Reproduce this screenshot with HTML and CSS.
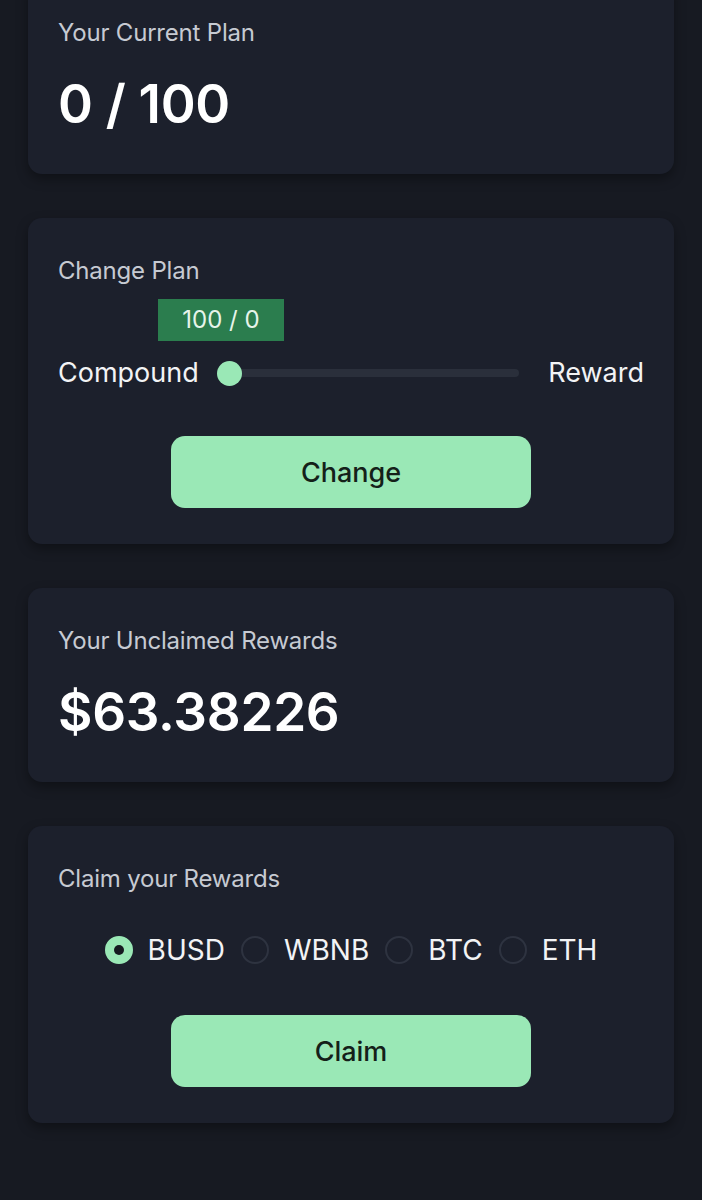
FILE: index.html
```html
<!DOCTYPE html>
<html lang="en">
<head>
<meta charset="utf-8">
<title>Plan</title>
<link rel="stylesheet" href="styles.css">
</head>
<body>
<main class="stack">
  <section class="card card-first">
    <div class="label">Your Current Plan</div>
    <div class="value">0 / 100</div>
  </section>

  <section class="card">
    <div class="label">Change Plan</div>
    <div class="badge">100 / 0</div>
    <div class="slider-row">
      <span class="side">Compound</span>
      <div class="track"><span class="thumb"></span></div>
      <span class="side">Reward</span>
    </div>
    <div class="btn-wrap"><button class="btn">Change</button></div>
  </section>

  <section class="card">
    <div class="label">Your Unclaimed Rewards</div>
    <div class="value">$63.38226</div>
  </section>

  <section class="card">
    <div class="label">Claim your Rewards</div>
    <div class="radios">
      <label class="radio"><span class="dot on"></span><span class="rtext">BUSD</span></label>
      <label class="radio"><span class="dot"></span><span class="rtext">WBNB</span></label>
      <label class="radio"><span class="dot"></span><span class="rtext">BTC</span></label>
      <label class="radio"><span class="dot"></span><span class="rtext">ETH</span></label>
    </div>
    <div class="btn-wrap btn-wrap-claim"><button class="btn">Claim</button></div>
  </section>
</main>
</body>
</html>
```
FILE: styles.css
```css
* { box-sizing: border-box; }
html, body {
  margin: 0;
  padding: 0;
  background: #171a22;
}
body {
  font-family: Inter, "Noto Sans", "Liberation Sans", sans-serif;
  color: #ffffff;
  height: 1200px;
  overflow: hidden;
}
.stack {
  display: flex;
  flex-direction: column;
  gap: 44px;
  padding: 0 28px;
  margin-top: -20px;
}
.card {
  background: #1c202c;
  border-radius: 14px;
  padding: 38px 30px 36px;
  box-shadow: 0 5px 12px rgba(0, 0, 0, 0.35);
}
.label {
  font-size: 24px;
  line-height: 30px;
  color: #c6cad2;
  font-weight: 400;
  letter-spacing: -0.2px;
}
.value {
  font-size: 53px;
  line-height: 64px;
  font-weight: 600;
  margin-top: 24px;
  margin-bottom: 2px;
  letter-spacing: -0.3px;
}
.badge {
  display: inline-block;
  margin-left: 100px;
  margin-top: 13px;
  width: 126px;
  height: 42px;
  line-height: 42px;
  text-align: center;
  background: #2b7d4e;
  color: #e6f4ea;
  font-size: 24px;
}
.slider-row {
  display: flex;
  align-items: center;
  margin-top: 15px;
  height: 34px;
}
.side {
  font-size: 27px;
  line-height: 34px;
  color: #f2f3f5;
}
.track {
  flex: 1;
  margin: 0 29px 0 24px;
  height: 8px;
  background: #2a2f3b;
  border-radius: 4px;
  display: flex;
  align-items: center;
}
.thumb {
  width: 25px;
  height: 25px;
  border-radius: 50%;
  background: #9ae8b6;
  margin-left: -6px;
}
.btn-wrap {
  display: flex;
  justify-content: center;
  margin-top: 46px;
}
.btn {
  width: 360px;
  height: 72px;
  border: none;
  border-radius: 14px;
  background: #9ae8b6;
  color: #142019;
  font-family: inherit;
  font-size: 27px;
  font-weight: 500;
}
.radios {
  display: flex;
  justify-content: center;
  align-items: center;
  margin-top: 39px;
  gap: 16px;
}
.radio {
  display: flex;
  align-items: center;
  gap: 15px;
}
.dot {
  width: 28px;
  height: 28px;
  border-radius: 50%;
  border: 2px solid #2e3340;
  display: flex;
  align-items: center;
  justify-content: center;
}
.dot.on {
  background: #9ae8b6;
  border-color: #9ae8b6;
}
.dot.on::after {
  content: "";
  width: 10px;
  height: 10px;
  border-radius: 50%;
  background: #151a20;
}
.rtext {
  font-size: 28px;
  line-height: 34px;
  color: #f2f3f5;
}
.btn-wrap-claim {
  margin-top: 48px;
}
```
